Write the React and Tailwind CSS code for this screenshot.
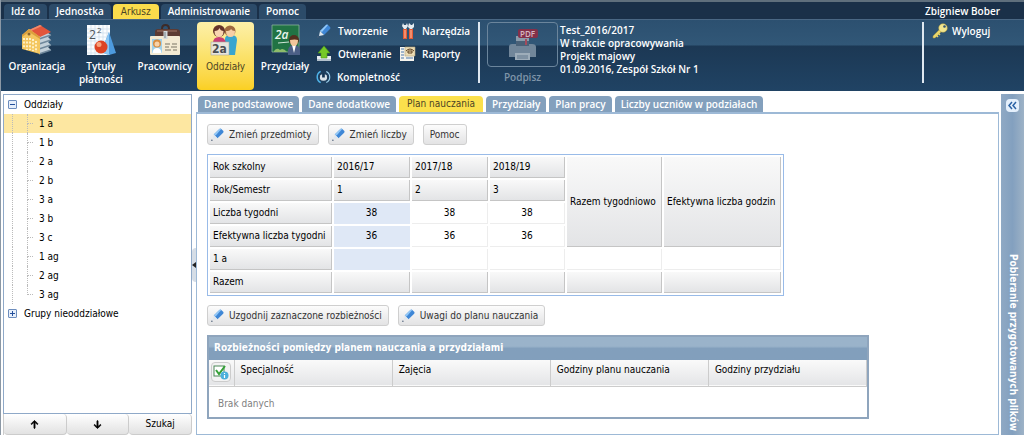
import { useState } from "react";
import { FaArrowUp, FaArrowDown } from "react-icons/fa6";

const MENU = ["Idź do", "Jednostka", "Arkusz", "Administrowanie", "Pomoc"];
const GROUPS = ["1 a", "1 b", "2 a", "2 b", "3 a", "3 b", "3 c", "1 ag", "2 ag", "3 ag"];
const TABS = [
  "Dane podstawowe", "Dane dodatkowe", "Plan nauczania",
  "Przydziały", "Plan pracy", "Liczby uczniów w podziałach"
];

// white labels on the dark bars
const LIGHT = "font-['Open_Sans',sans-serif] font-semibold text-white";

/* ---------- ribbon icons ---------- */

const BuildingIcon = () => (
  <svg viewBox="0 0 32 32" className="h-8 w-8">
    <path d="M18 30l12-4-3-3 3-2-3-3 3-2-3-3 3-2-6-4-10 8z" fill="#c3d0da" />
    <path d="M18 30l12-4M18 25l12-4M18 20l12-4M18 15l12-4" stroke="#6f879b" strokeWidth="1.4" />
    <path d="M8 6l11-5 11 7-11 5z" fill="#e2553b" />
    <path d="M8 6l11-5 2 1-11 5z" fill="#f08a6c" />
    <path d="M1 11l7-6 11 8v17L1 25z" fill="#f4c65f" />
    <path d="M1 11l7-6 11 8v2L8 8l-7 5z" fill="#dc9f3c" />
    <path d="M3 14v10M6 14v12M9 14v12M12 15v12M15 17v11" stroke="#fff7d8" strokeWidth="1.7" strokeDasharray="2 1.6" />
    <circle cx="8" cy="10" r="1.5" fill="#8a6530" />
  </svg>
);

const MathIcon = () => (
  <svg viewBox="0 0 32 32" className="h-8 w-8">
    <path d="M2 1h23v30H2z" fill="#fbfdff" />
    <path d="M6 1v30M10 1v30M14 1v30M18 1v30M22 1v30M2 5h23M2 9h23M2 13h23M2 17h23M2 21h23M2 25h23M2 29h23" stroke="#cbdbe9" strokeWidth=".7" />
    <text x="4" y="15" fontSize="12" fill="#4c5358" className="font-normal">2</text>
    <text x="12" y="9" fontSize="8" fill="#4c5358" className="font-normal">2</text>
    <path d="M24 8l7 21-7 2-8-3z" fill="#4d9ade" />
    <path d="M24 8l-8 20 8 3z" fill="#8cc6f2" />
    <circle cx="16" cy="23" r="6.5" fill="#dd4323" />
    <circle cx="14" cy="20.5" r="2.5" fill="#f7a27c" />
  </svg>
);

const BadgeIcon = () => (
  <svg viewBox="0 0 32 32" className="h-8 w-8">
    <path d="M6 8q0-3 3-3h18q4 0 4 3v8H6z" fill="#5d3b33" />
    <path d="M8 6h20v2H8z" fill="#7f584c" />
    <path d="M13 5q0-4 3.5-4T20 5" fill="none" stroke="#3d2b28" strokeWidth="2" />
    <rect x="1" y="12" width="30" height="19" rx="1" fill="#f3ead3" />
    <path d="M14.5 7h4v8h-4z" fill="#d2d9dd" />
    <path d="M15.5 8h1v6h-1z" fill="#7b868c" />
    <rect x="3" y="15" width="10" height="14" fill="#9fd0ea" />
    <circle cx="8" cy="19.5" r="4" fill="#d88c3f" />
    <circle cx="8" cy="20" r="2.5" fill="#f8d2a8" />
    <path d="M3.5 29q.5-5 4.5-5t4.5 5z" fill="#fff" />
    <path d="M16 20h5M23 20h5M16 23h4M22 23h6M16 26h6M24 26h4" stroke="#7a7567" strokeWidth="1.2" />
  </svg>
);

const PupilsIcon = () => (
  <svg viewBox="0 0 32 32" className="h-8 w-8">
    <path d="M15 31V15q0-4 6-4t6 5l-2 15z" fill="#38a5cf" />
    <circle cx="20" cy="7" r="5.5" fill="#a06a3f" />
    <path d="M16 7q4 0 5-2 1 2 4 2 0 6-4.5 6T16 7z" fill="#f6cfa6" />
    <path d="M3 19q0-6 6-6t7 6z" fill="#c93d74" />
    <circle cx="9" cy="7" r="6" fill="#65342a" />
    <path d="M4.5 7q4 0 5-3 1 3 4 3 0 6-4.5 6T4.5 7z" fill="#f9d5b0" />
    <rect x="1" y="18" width="18" height="13" fill="#e7e5dc" stroke="#aaa89d" strokeWidth=".6" />
    <text x="2" y="29" fontSize="12" fontWeight="bold" fill="#4b4f52">2a</text>
  </svg>
);

const BoardIcon = () => (
  <svg viewBox="0 0 32 32" className="h-8 w-8">
    <path d="M3 1h27v27H3z" fill="#217344" stroke="#8ab39a" strokeWidth=".8" />
    <text x="6" y="15" fontSize="12" fontStyle="italic" fill="#e9f5ec">2a</text>
    <path d="M9 19l11-1" stroke="#cfe5d6" />
    <path d="M5 27q3-4 6-1 3-3 7 2H5z" fill="#8ebc6b" />
    <path d="M19 31v-5q1-5 6-5t6 5v5z" fill="#4c5f86" />
    <path d="M23 21h4l-2 8z" fill="#fff" />
    <circle cx="25" cy="16" r="5" fill="#54301f" />
    <path d="M21 16q5-1 8 0 0 6-4 6t-4-6z" fill="#f2c79c" />
  </svg>
);

const PencilIcon = ({ className = "h-4 w-4" }) => (
  <svg viewBox="0 0 16 16" className={className}>
    <path d="M4 8l6-6q1-1 2 0l2 2q1 1 0 2l-6 6z" fill="#3f87d6" />
    <path d="M4 8l6-6q1-1 2 0L6 9z" fill="#93c8f7" />
    <path d="M4 8l4 4-5 1z" fill="#dfe7ef" />
    <circle cx="2" cy="14" r=".8" fill="#4d5f78" />
  </svg>
);

const OpenIcon = () => (
  <svg viewBox="0 0 16 16" className="h-4 w-4">
    <path d="M1 10h14v5H1z" fill="#e8edf1" />
    <path d="M1 13h14v2H1z" fill="#b3c1cc" />
    <path d="M8 0l6 7h-3v5H5V7H2z" fill="#76c928" stroke="#4a9417" strokeWidth=".6" />
  </svg>
);

const CompleteIcon = () => (
  <svg viewBox="0 0 16 16" className="h-4 w-4">
    <path d="M5 2a6.7 6.7 0 0 0 0 12" fill="none" stroke="#4fb3e8" strokeWidth="1.6" />
    <path d="M11 2a6.700 6.700 0 0 1 0 12" fill="none" stroke="#9fd3f0" strokeWidth="1.2" />
    <path d="M4.500 6q-1.500 6 3.500 6t3.500-6L9.500 5v3.500h-3V5z" fill="#dbe4ea" />
    <path d="M8 4v4" stroke="#17334f" />
  </svg>
);

const ToolsIcon = () => (
  <svg viewBox="0 0 16 16" className="h-4 w-4">
    <path d="M3 0l1 2h2l1-2 1 3-2 3H4L2 3zM9 0l2 2h1l2-2v4l-2 2h-2L8 4z" fill="#e6ecf0" />
    <path d="M3 6h4v10H3zM9 6h4v10H9z" fill="#e35b35" />
    <path d="M5 7v8M11 7v8" stroke="#ffc0a4" />
  </svg>
);

const ReportIcon = () => (
  <svg viewBox="0 0 16 16" className="h-4 w-4">
    <path d="M0 1h14v14H0z" fill="#f6f4ed" />
    <path d="M5 1h10v9H5z" fill="#ecdcb4" stroke="#b7a57c" strokeWidth=".6" />
    <path d="M1 3h3M1 6h3M1 9h3M1 12h3M6 12h7" stroke="#4c78ad" />
    <path d="M6 5q4-4 8 0M8 5h4v2H8z" fill="none" stroke="#5d4022" />
  </svg>
);

const PdfPrinterIcon = () => (
  <svg viewBox="0 0 32 34" className="h-[34px] w-8">
    <path d="M9 8h13v10H9z" fill="#8b9cab" />
    <path d="M2 19q0-3 3-3h20q4 0 4 3v10H2z" fill="#71869a" />
    <path d="M9 13h13v5H9z" fill="#4a6178" />
    <path d="M8 25h15v7H8z" fill="#9eadba" />
    <path d="M10 28h11M10 30h11" stroke="#61778c" />
    <path d="M19 11v6" stroke="#a34b5d" strokeWidth="2" />
    <rect x="11" y="1" width="20" height="9" rx="2" fill="#84304a" />
    <text x="13" y="8.5" fontSize="8" fill="#d6b7c2">PDF</text>
  </svg>
);

const KeyIcon = () => (
  <svg viewBox="0 0 16 16" className="h-4 w-4">
    <path d="M8 6l2 2-7 7H1v-2z" fill="#e8d56b" stroke="#a8923a" strokeWidth=".5" />
    <path d="M4 12l2 2M6 10l2 2" stroke="#e8d56b" strokeWidth="1.5" />
    <circle cx="11" cy="5" r="4.3" fill="#f3e68d" stroke="#b39c3d" strokeWidth=".5" />
    <circle cx="12.5" cy="3.5" r="1.3" fill="#365570" />
  </svg>
);

const CheckInfoIcon = () => (
  <svg viewBox="0 0 16 16" className="h-4 w-4">
    <rect x="1" y="2" width="10" height="10" fill="#fff" stroke="#4c8758" />
    <path d="M3 6l3 4 6-8" fill="none" stroke="#35a137" strokeWidth="2" />
    <circle cx="11.5" cy="11.5" r="4" fill="#4db0dc" />
    <path d="M11.5 11v3M11.5 9v1" stroke="#fff" strokeWidth="1.2" />
  </svg>
);

/* ---------- ribbon ---------- */

const RibbonButton = ({ icon, label, active, width = "w-16" }) => (
  <button
    className={`flex h-[68px] shrink-0 flex-col items-center rounded-sm pt-0.5 leading-[13px] ${width} ${
      active
        ? "bg-linear-to-b from-[#fdf0a8] via-[#fbe26a] to-[#fbd01f] text-[#4b4426]"
        : LIGHT
    }`}
  >
    {icon}
    <span className="mt-1">{label}</span>
  </button>
);

const SmallButton = ({ icon, label }) => (
  <button className={`flex h-[18px] items-center gap-1.5 ${LIGHT}`}>
    {icon}
    {label}
  </button>
);

const Ribbon = () => (
  <header className="border-t-2 border-[#5f6f7d] bg-[#1a3049]">
    <div className="flex h-[17px] items-end pr-6 pl-[3px]">
      <nav className="flex gap-[2px]">
        {MENU.map((item) => (
          <button
            key={item}
            className={`h-[15px] rounded-t leading-[15px] ${
              item === "Arkusz" ? "bg-[#fbdc4c] px-2 text-[#4b4426]" : `bg-[#2c4b69] px-[7px] ${LIGHT}`
            }`}
          >
            {item}
          </button>
        ))}
      </nav>
      <span className={`ml-auto leading-[15px] ${LIGHT}`}>Zbigniew Bober</span>
    </div>

    <div className="flex h-[72px] items-start border-t border-[#4a6784] bg-[linear-gradient(#2c5070_0,#315777_25px,#1c3854_26px,#204364_100%)] pt-[2px] pl-1">
      <RibbonButton icon={<BuildingIcon />} label="Organizacja" />
      <RibbonButton icon={<MathIcon />} label={<>Tytuły<br />płatności</>} />
      <RibbonButton icon={<BadgeIcon />} label="Pracownicy" />
      <RibbonButton icon={<PupilsIcon />} label="Oddziały" active width="w-[57px]" />
      <RibbonButton icon={<BoardIcon />} label="Przydziały" width="w-[62px]" />

      <div className="flex w-[84px] shrink-0 flex-col gap-[5px]">
        <SmallButton icon={<PencilIcon />} label="Tworzenie" />
        <SmallButton icon={<OpenIcon />} label="Otwieranie" />
        <SmallButton icon={<CompleteIcon />} label="Kompletność" />
      </div>
      <div className="flex w-[78px] shrink-0 flex-col gap-[5px]">
        <SmallButton icon={<ToolsIcon />} label="Narzędzia" />
        <SmallButton icon={<ReportIcon />} label="Raporty" />
      </div>

      <div className="mr-[7px] h-[61px] w-0.5 shrink-0 bg-[#dfe8f0]" />
      <button className="w-[71px] shrink-0 font-['Open_Sans',sans-serif] font-semibold text-[#7f95a9]" disabled>
        <span className="flex h-[45px] items-center justify-center rounded-sm border border-[#6b859c]">
          <PdfPrinterIcon />
        </span>
        <span className="mt-1 block leading-[13px]">Podpisz</span>
      </button>
      <div className={`mt-0.5 ml-0.5 leading-[13px] ${LIGHT}`}>
        <p>Test_2016/2017</p>
        <p>W trakcie opracowywania</p>
        <p>Projekt majowy</p>
        <p>01.09.2016, Zespół Szkół Nr 1</p>
      </div>

      <div className="ml-auto flex w-[102px] shrink-0 items-start">
        <div className="mr-2 h-[61px] w-0.5 bg-[#dfe8f0]" />
        <button className={`flex h-[18px] items-center gap-1 ${LIGHT}`}>
          <KeyIcon />
          Wyloguj
        </button>
      </div>
    </div>
  </header>
);

/* ---------- left tree ---------- */

const Toggle = ({ open, label }) => (
  <button
    aria-label={label}
    className="flex h-[9px] w-[9px] items-center justify-center rounded-[1px] border border-[#6d8dbd] bg-[#e6effb]"
  >
    <svg viewBox="0 0 5 5" className="h-[5px] w-[5px]">
      <path d={open ? "M0 2.5h5" : "M0 2.5h5M2.5 0v5"} stroke="#24509c" />
    </svg>
  </button>
);

const FOOT_BUTTON = "flex h-[21px] items-center justify-center rounded-sm border-r border-b border-[#ccc] bg-linear-to-b from-white to-[#e2e2e2]";

const Tree = () => {
  const [selected, setSelected] = useState("1 a");

  return (
    <aside className="flex w-[189px] shrink-0 flex-col">
      <div className="flex-1 border border-[#8fa9c8] bg-white">
        <div className="flex h-[19px] items-center gap-[7px] pl-1">
          <Toggle open label="Zwiń Oddziały" />
          Oddziały
        </div>
        <ul>
          {GROUPS.map((group) => (
            <li key={group} className={`flex h-[19px] pl-2 ${group === selected ? "bg-[#fde7a1]" : ""}`}>
              <span className="w-[15px] border-l border-dotted border-[#bbb]" />
              <span className="w-[6px]">
                <span className="block h-[10px] border-b border-l border-dotted border-[#bbb]" />
                {group !== "3 ag" && <span className="block h-[9px] border-l border-dotted border-[#bbb]" />}
              </span>
              <button className="flex-1 pl-1.5 text-left" onClick={() => setSelected(group)}>
                {group}
              </button>
            </li>
          ))}
        </ul>
        <div className="flex h-[19px] items-center gap-[7px] pl-1">
          <Toggle label="Rozwiń Grupy nieoddziałowe" />
          Grupy nieoddziałowe
        </div>
      </div>
      <div className="grid grid-cols-3 border-l border-[#ccc]">
        <button aria-label="W górę" className={FOOT_BUTTON}>
          <FaArrowUp className="h-[9px] w-[9px] stroke-black stroke-[40]" />
        </button>
        <button aria-label="W dół" className={FOOT_BUTTON}>
          <FaArrowDown className="h-[9px] w-[9px] stroke-black stroke-[40]" />
        </button>
        <button className={FOOT_BUTTON}>Szukaj</button>
      </div>
    </aside>
  );
};

/* ---------- main panel ---------- */

const ToolButton = ({ pencil, children }) => (
  <button className={`flex h-[21px] items-center gap-1 rounded-[3px] border border-[#cfcfcf] bg-linear-to-b from-[#fcfcfc] to-[#e3e3e4] text-[#333] ${pencil ? "pr-1.5 pl-0.5" : "px-1.5"}`}>
    {pencil && <PencilIcon className="h-[15px] w-[15px]" />}
    {children}
  </button>
);

const HEAD = "border-r border-b border-[#c5c5c5] bg-linear-to-b from-[#f9f9f9] to-[#e3e4e6] px-[3px] py-0 text-left font-normal";
const CELL = "border-r border-b border-[#ededed] p-0 text-center";
const MARKED = "border-r border-b border-[#dfe8f6] bg-[#dfe8f6] p-0 text-center";

const PlanTable = () => (
  <table className="w-[577px] table-fixed border-separate border-spacing-[2px] border border-[#99bbe8]">
    <colgroup>
      <col className="w-[122px]" />
      <col className="w-[76px]" />
      <col className="w-[76px]" />
      <col className="w-[75px]" />
      <col className="w-[95px]" />
      <col />
    </colgroup>
    <tbody>
      <tr className="h-[21px]">
        <th className={HEAD}>Rok szkolny</th>
        <th className={HEAD}>2016/17</th>
        <th className={HEAD}>2017/18</th>
        <th className={HEAD}>2018/19</th>
        <th className={`${HEAD} whitespace-nowrap`} rowSpan={4}>Razem tygodniowo</th>
        <th className={`${HEAD} whitespace-nowrap`} rowSpan={4}>Efektywna liczba godzin</th>
      </tr>
      <tr className="h-[21px]">
        <th className={HEAD}>Rok/Semestr</th>
        <th className={HEAD}>1</th>
        <th className={HEAD}>2</th>
        <th className={HEAD}>3</th>
      </tr>
      {[["Liczba tygodni", 38], ["Efektywna liczba tygodni", 36]].map(([label, weeks]) => (
        <tr key={label} className="h-[21px]">
          <th className={`${HEAD} whitespace-nowrap`}>{label}</th>
          <td className={MARKED}>{weeks}</td>
          <td className={CELL}>{weeks}</td>
          <td className={CELL}>{weeks}</td>
        </tr>
      ))}
      <tr className="h-[21px]">
        <th className={HEAD}>1 a</th>
        <td className={MARKED} />
        <td className={CELL} />
        <td className={CELL} />
        <td className={CELL} />
        <td className={CELL} />
      </tr>
      <tr className="h-[21px]">
        <th className={HEAD}>Razem</th>
        <td className={HEAD} />
        <td className={HEAD} />
        <td className={HEAD} />
        <td className={HEAD} />
        <td className={HEAD} />
      </tr>
    </tbody>
  </table>
);

const Differences = () => (
  <section className="w-[662px] border-2 border-[#8fa5bd]">
    <h2 className="h-[23px] bg-linear-to-b from-[#9ab3ca] from-40% to-[#829fbc] to-50% pl-[5px] leading-[22px] font-bold text-white">
      Rozbieżności pomiędzy planem nauczania a przydziałami
    </h2>
    <table className="w-full table-fixed border-collapse">
      <thead>
        <tr className="h-[26px] border-b border-[#ccc] bg-linear-to-b from-[#fafafa] to-[#e4e5e7] text-left align-top">
          <th className="w-[25px] border-r border-[#ccc] p-0">
            <button aria-label="Zaznacz wszystkie" className="m-0.5 flex h-5 w-5 items-center justify-center rounded-sm border border-[#ccc] bg-[#f3f3f3]">
              <CheckInfoIcon />
            </button>
          </th>
          {["Specjalność", "Zajęcia", "Godziny planu nauczania", "Godziny przydziału"].map((title) => (
            <th key={title} className="border-r border-[#ccc] px-[6px] pt-[3px] font-normal">{title}</th>
          ))}
        </tr>
      </thead>
      <tbody>
        <tr className="h-[31px]">
          <td colSpan={5} className="px-[9px] pt-1 text-[#808080]">Brak danych</td>
        </tr>
      </tbody>
    </table>
  </section>
);

const Main = () => {
  const [tab, setTab] = useState("Plan nauczania");

  return (
    <main className="flex min-w-0 flex-1 flex-col pt-0.5">
      <div className="flex gap-[3px] pl-0.5">
        {TABS.map((name) => (
          <button
            key={name}
            onClick={() => setTab(name)}
            className={`h-4 rounded-t leading-4 ${
              name === tab ? "bg-[#fbe04c] px-2 text-[#4b4426]" : `bg-[#83a0bd] px-1.5 ${LIGHT}`
            }`}
          >
            {name}
          </button>
        ))}
      </div>
      <div className="flex-1 border border-t-2 border-[#9db9d6] px-2.5 pt-2.5">
        <div className="flex gap-[9px]">
          <ToolButton pencil>Zmień przedmioty</ToolButton>
          <ToolButton pencil>Zmień liczby</ToolButton>
          <ToolButton>Pomoc</ToolButton>
        </div>
        <div className="my-[9px]">
          <PlanTable />
        </div>
        <div className="mb-[9px] flex gap-[9px]">
          <ToolButton pencil>Uzgodnij zaznaczone rozbieżności</ToolButton>
          <ToolButton pencil>Uwagi do planu nauczania</ToolButton>
        </div>
        <Differences />
      </div>
    </main>
  );
};

const App = () => (
  <div className="flex min-h-screen flex-col border-l border-[#8b98a5] bg-white font-['DejaVu_Sans_Condensed','Noto_Sans',sans-serif] text-[10px] leading-[14px] text-black">
    <Ribbon />
    <div className="flex flex-1 pt-[3px] pl-0.5">
      <Tree />
      <div className="flex w-1 items-center">
        <button aria-label="Zwiń panel" className="flex h-[34px] w-1 items-center rounded-l bg-[#d5dde6]">
          <svg viewBox="0 0 4 6" className="h-1.5 w-1"><path d="M4 0v6L0 3z" fill="#222" /></svg>
        </button>
      </div>
      <Main />
      <aside className="ml-0.5 flex w-[23px] flex-col items-center justify-between bg-linear-to-r from-[#8fa9c4] via-[#83a0bf] to-[#9db2c6] pt-[5px] pb-1">
        <button aria-label="Rozwiń panel" className="h-[13px] w-[13px] rounded-sm bg-[#e4effb]">
          <svg viewBox="0 0 13 13"><path d="M6 3L3 6.5 6 10M10 3L7 6.5 10 10" fill="none" stroke="#2a62a5" strokeWidth="1.5" /></svg>
        </button>
        <h2 className="font-bold text-white [writing-mode:vertical-rl]">Pobieranie przygotowanych plików</h2>
      </aside>
    </div>
  </div>
);

export default App;
